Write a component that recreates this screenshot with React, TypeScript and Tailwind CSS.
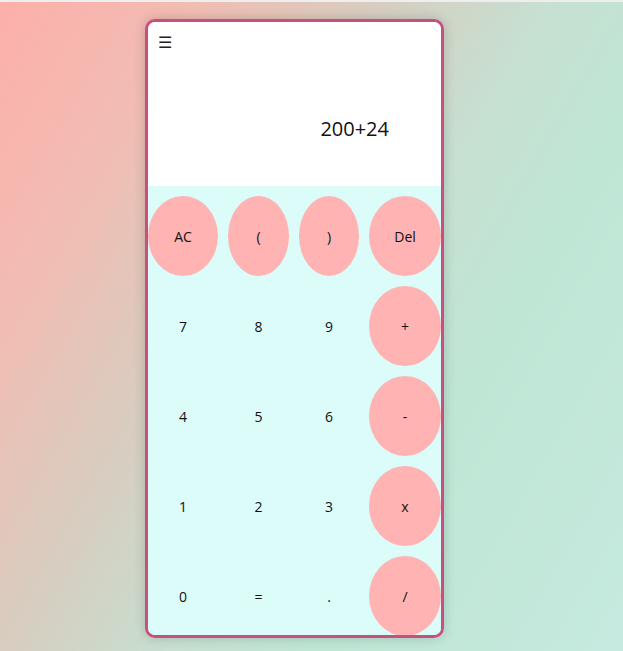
import React from "react";

const rows = [
  ["AC", "(", ")", "Del"],
  ["7", "8", "9", "+"],
  ["4", "5", "6", "-"],
  ["1", "2", "3", "x"],
  ["0", "=", ".", "/"],
];

const pink = new Set(["AC", "(", ")", "Del", "+", "-", "x", "/"]);

const App = () => {
  return (
    <div
      className="min-h-[651px] w-full bg-[linear-gradient(120deg,#fdafab_0%,#f1bdb3_20%,#d7cdc0_38%,#c6e0d1_55%,#bfe6d5_70%,#c6eadf_100%)]"
      style={{ fontFamily: '"Open Sans", "Noto Sans", sans-serif' }}
    >
      <div className="h-[2px] bg-[#eeeeee]" />
      <div className="pl-[145px] pt-[17px]">
        <div className="w-[299px] h-[619px] border-[3px] border-[#c7507f] rounded-[10px] overflow-hidden shadow-[0_0_12px_rgba(0,0,0,0.18)] flex flex-col">
          <div className="h-[164px] bg-white relative shrink-0">
            <span className="absolute left-[10px] top-[10px] text-[16px] leading-[20px] text-[#222]">
              ☰
            </span>
            <div className="h-full flex items-center justify-end pr-[52px] pt-[49px]">
              <span className="text-[20px] text-[#111]">200+24</span>
            </div>
          </div>
          <div className="flex-1 bg-[#dcfcf9] pt-[10px]">
            <div className="grid grid-cols-[70px_61px_60px_72px] auto-rows-[80px] gap-[10px]">
              {rows.flat().map((k) => (
                <button
                  key={k}
                  className={
                    pink.has(k)
                      ? "rounded-[50%] bg-[#ffb3b3] text-[14px] text-[#111] flex items-center justify-center"
                      : "text-[14px] text-[#111] flex items-center justify-center"
                  }
                >
                  {k}
                </button>
              ))}
            </div>
          </div>
        </div>
      </div>
    </div>
  );
};

export default App;
